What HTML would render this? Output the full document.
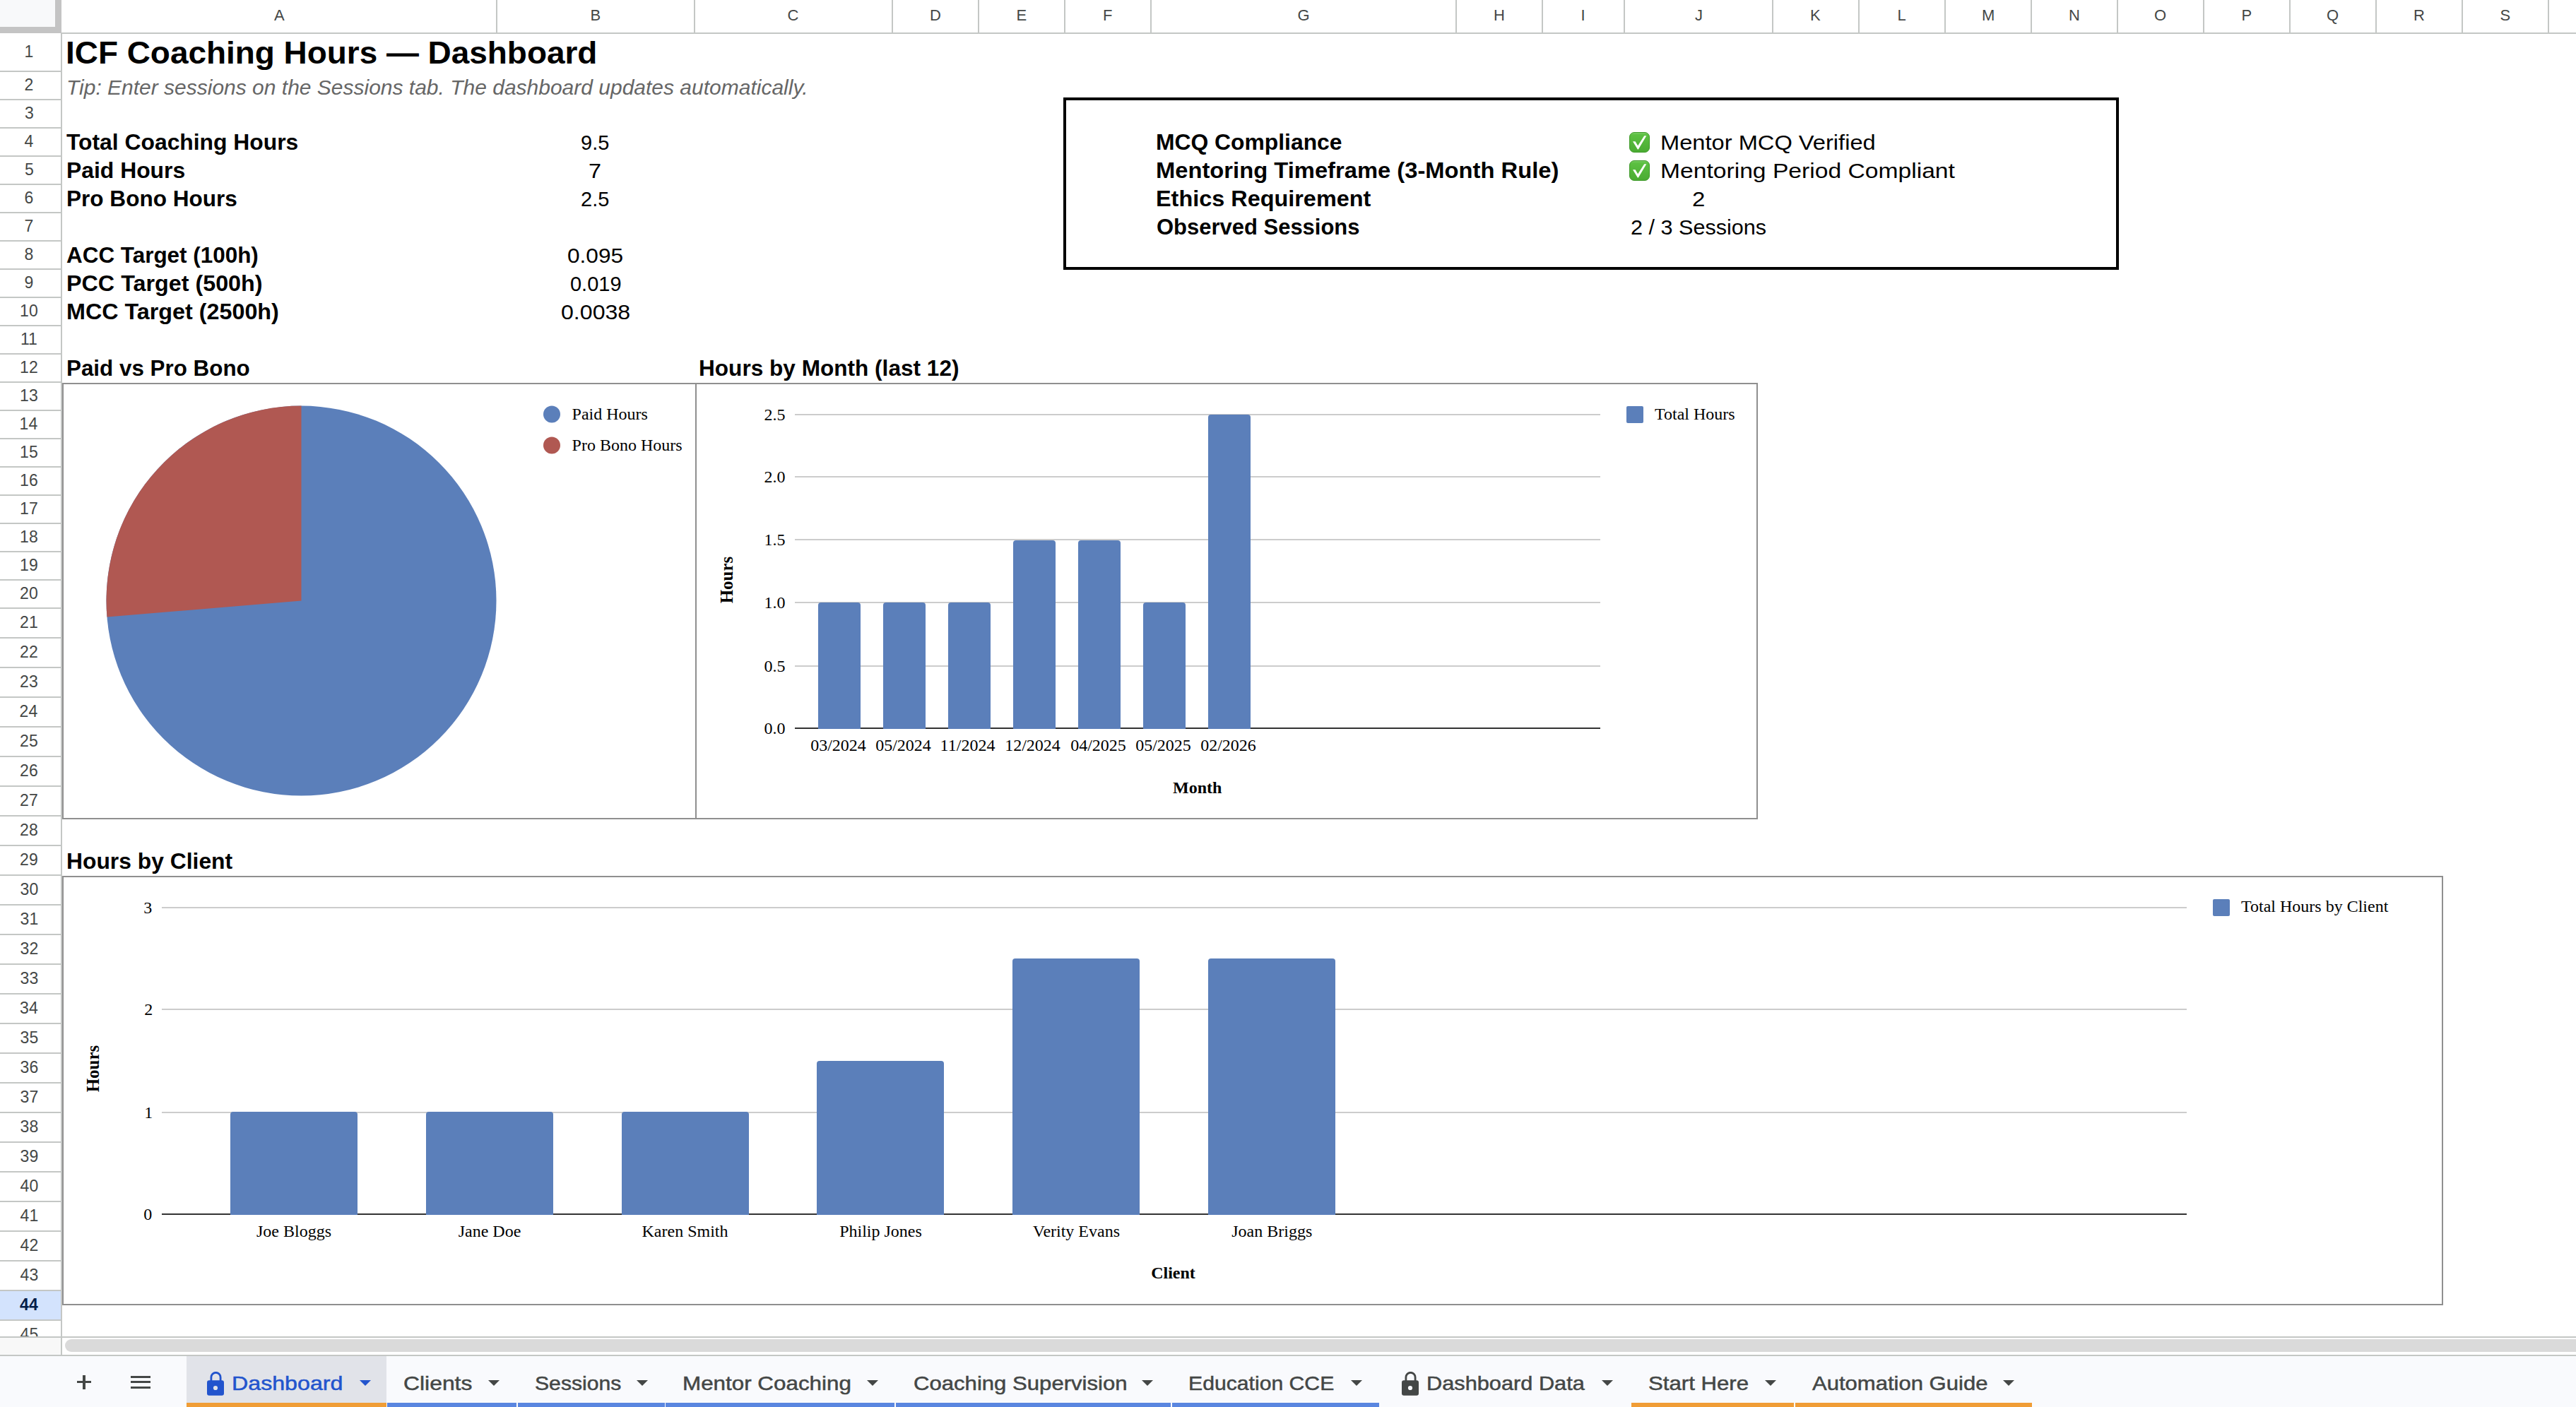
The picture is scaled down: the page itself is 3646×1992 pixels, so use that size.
<!DOCTYPE html>
<html><head><meta charset="utf-8"><title>ICF Coaching Hours — Dashboard</title>
<style>
html,body{margin:0;padding:0;background:#fff;}
body{width:3646px;height:1992px;overflow:hidden;position:relative;}
.t{position:absolute;white-space:nowrap;transform-origin:0 0;}
.r{position:absolute;}
#vp{position:absolute;left:0;top:0;width:3646px;height:1892px;overflow:hidden;}
</style></head><body>
<div id="vp">
<div class="r" style="left:0px;top:0px;width:78px;height:38px;background:#f8f9fa;"></div>
<div class="r" style="left:78px;top:0px;width:9px;height:47px;background:#c4c4c4;"></div>
<div class="r" style="left:0px;top:38px;width:87px;height:9px;background:#c4c4c4;"></div>
<div class="r" style="left:87px;top:46px;width:3559px;height:2px;background:#c4c7c5;"></div>
<div class="r" style="left:702px;top:0px;width:2px;height:46px;background:#c4c7c5;"></div>
<div class="r" style="left:982px;top:0px;width:2px;height:46px;background:#c4c7c5;"></div>
<div class="r" style="left:1262px;top:0px;width:2px;height:46px;background:#c4c7c5;"></div>
<div class="r" style="left:1384px;top:0px;width:2px;height:46px;background:#c4c7c5;"></div>
<div class="r" style="left:1506px;top:0px;width:2px;height:46px;background:#c4c7c5;"></div>
<div class="r" style="left:1628px;top:0px;width:2px;height:46px;background:#c4c7c5;"></div>
<div class="r" style="left:2060px;top:0px;width:2px;height:46px;background:#c4c7c5;"></div>
<div class="r" style="left:2182px;top:0px;width:2px;height:46px;background:#c4c7c5;"></div>
<div class="r" style="left:2298px;top:0px;width:2px;height:46px;background:#c4c7c5;"></div>
<div class="r" style="left:2508px;top:0px;width:2px;height:46px;background:#c4c7c5;"></div>
<div class="r" style="left:2630px;top:0px;width:2px;height:46px;background:#c4c7c5;"></div>
<div class="r" style="left:2752px;top:0px;width:2px;height:46px;background:#c4c7c5;"></div>
<div class="r" style="left:2874px;top:0px;width:2px;height:46px;background:#c4c7c5;"></div>
<div class="r" style="left:2996px;top:0px;width:2px;height:46px;background:#c4c7c5;"></div>
<div class="r" style="left:3118px;top:0px;width:2px;height:46px;background:#c4c7c5;"></div>
<div class="r" style="left:3240px;top:0px;width:2px;height:46px;background:#c4c7c5;"></div>
<div class="r" style="left:3362px;top:0px;width:2px;height:46px;background:#c4c7c5;"></div>
<div class="r" style="left:3484px;top:0px;width:2px;height:46px;background:#c4c7c5;"></div>
<div class="r" style="left:3606px;top:0px;width:2px;height:46px;background:#c4c7c5;"></div>
<div class="t" style='left:388.00px;top:11.38px;font-size:22px;line-height:22px;font-family:"Liberation Sans", sans-serif;font-weight:400;color:#444746;'>A</div>
<div class="t" style='left:835.50px;top:11.38px;font-size:22px;line-height:22px;font-family:"Liberation Sans", sans-serif;font-weight:400;color:#444746;'>B</div>
<div class="t" style='left:1114.50px;top:11.38px;font-size:22px;line-height:22px;font-family:"Liberation Sans", sans-serif;font-weight:400;color:#444746;'>C</div>
<div class="t" style='left:1316.00px;top:11.38px;font-size:22px;line-height:22px;font-family:"Liberation Sans", sans-serif;font-weight:400;color:#444746;'>D</div>
<div class="t" style='left:1438.50px;top:11.38px;font-size:22px;line-height:22px;font-family:"Liberation Sans", sans-serif;font-weight:400;color:#444746;'>E</div>
<div class="t" style='left:1561.00px;top:11.38px;font-size:22px;line-height:22px;font-family:"Liberation Sans", sans-serif;font-weight:400;color:#444746;'>F</div>
<div class="t" style='left:1836.50px;top:11.38px;font-size:22px;line-height:22px;font-family:"Liberation Sans", sans-serif;font-weight:400;color:#444746;'>G</div>
<div class="t" style='left:2114.00px;top:11.38px;font-size:22px;line-height:22px;font-family:"Liberation Sans", sans-serif;font-weight:400;color:#444746;'>H</div>
<div class="t" style='left:2237.50px;top:11.38px;font-size:22px;line-height:22px;font-family:"Liberation Sans", sans-serif;font-weight:400;color:#444746;'>I</div>
<div class="t" style='left:2399.00px;top:11.38px;font-size:22px;line-height:22px;font-family:"Liberation Sans", sans-serif;font-weight:400;color:#444746;'>J</div>
<div class="t" style='left:2562.00px;top:11.38px;font-size:22px;line-height:22px;font-family:"Liberation Sans", sans-serif;font-weight:400;color:#444746;'>K</div>
<div class="t" style='left:2685.50px;top:11.38px;font-size:22px;line-height:22px;font-family:"Liberation Sans", sans-serif;font-weight:400;color:#444746;'>L</div>
<div class="t" style='left:2805.00px;top:11.38px;font-size:22px;line-height:22px;font-family:"Liberation Sans", sans-serif;font-weight:400;color:#444746;'>M</div>
<div class="t" style='left:2928.00px;top:11.38px;font-size:22px;line-height:22px;font-family:"Liberation Sans", sans-serif;font-weight:400;color:#444746;'>N</div>
<div class="t" style='left:3049.00px;top:11.38px;font-size:22px;line-height:22px;font-family:"Liberation Sans", sans-serif;font-weight:400;color:#444746;'>O</div>
<div class="t" style='left:3172.50px;top:11.38px;font-size:22px;line-height:22px;font-family:"Liberation Sans", sans-serif;font-weight:400;color:#444746;'>P</div>
<div class="t" style='left:3293.00px;top:11.38px;font-size:22px;line-height:22px;font-family:"Liberation Sans", sans-serif;font-weight:400;color:#444746;'>Q</div>
<div class="t" style='left:3416.00px;top:11.38px;font-size:22px;line-height:22px;font-family:"Liberation Sans", sans-serif;font-weight:400;color:#444746;'>R</div>
<div class="t" style='left:3538.50px;top:11.38px;font-size:22px;line-height:22px;font-family:"Liberation Sans", sans-serif;font-weight:400;color:#444746;'>S</div>
<div class="r" style="left:86px;top:47px;width:2px;height:1870px;background:#c4c7c5;"></div>
<div class="r" style="left:0px;top:100px;width:86px;height:2px;background:#c4c7c5;"></div>
<div class="t" style='left:34.50px;top:61.53px;font-size:23px;line-height:23px;font-family:"Liberation Sans", sans-serif;font-weight:400;color:#444746;'>1</div>
<div class="r" style="left:0px;top:140px;width:86px;height:2px;background:#c4c7c5;"></div>
<div class="t" style='left:34.50px;top:108.53px;font-size:23px;line-height:23px;font-family:"Liberation Sans", sans-serif;font-weight:400;color:#444746;'>2</div>
<div class="r" style="left:0px;top:180px;width:86px;height:2px;background:#c4c7c5;"></div>
<div class="t" style='left:35.00px;top:148.53px;font-size:23px;line-height:23px;font-family:"Liberation Sans", sans-serif;font-weight:400;color:#444746;'>3</div>
<div class="r" style="left:0px;top:220px;width:86px;height:2px;background:#c4c7c5;"></div>
<div class="t" style='left:34.50px;top:188.53px;font-size:23px;line-height:23px;font-family:"Liberation Sans", sans-serif;font-weight:400;color:#444746;'>4</div>
<div class="r" style="left:0px;top:260px;width:86px;height:2px;background:#c4c7c5;"></div>
<div class="t" style='left:35.00px;top:228.53px;font-size:23px;line-height:23px;font-family:"Liberation Sans", sans-serif;font-weight:400;color:#444746;'>5</div>
<div class="r" style="left:0px;top:300px;width:86px;height:2px;background:#c4c7c5;"></div>
<div class="t" style='left:34.50px;top:268.53px;font-size:23px;line-height:23px;font-family:"Liberation Sans", sans-serif;font-weight:400;color:#444746;'>6</div>
<div class="r" style="left:0px;top:340px;width:86px;height:2px;background:#c4c7c5;"></div>
<div class="t" style='left:34.50px;top:308.53px;font-size:23px;line-height:23px;font-family:"Liberation Sans", sans-serif;font-weight:400;color:#444746;'>7</div>
<div class="r" style="left:0px;top:380px;width:86px;height:2px;background:#c4c7c5;"></div>
<div class="t" style='left:34.50px;top:348.53px;font-size:23px;line-height:23px;font-family:"Liberation Sans", sans-serif;font-weight:400;color:#444746;'>8</div>
<div class="r" style="left:0px;top:420px;width:86px;height:2px;background:#c4c7c5;"></div>
<div class="t" style='left:34.50px;top:388.53px;font-size:23px;line-height:23px;font-family:"Liberation Sans", sans-serif;font-weight:400;color:#444746;'>9</div>
<div class="r" style="left:0px;top:460px;width:86px;height:2px;background:#c4c7c5;"></div>
<div class="t" style='left:28.10px;top:428.53px;font-size:23px;line-height:23px;font-family:"Liberation Sans", sans-serif;font-weight:400;color:#444746;'>10</div>
<div class="r" style="left:0px;top:500px;width:86px;height:2px;background:#c4c7c5;"></div>
<div class="t" style='left:28.96px;top:468.53px;font-size:23px;line-height:23px;font-family:"Liberation Sans", sans-serif;font-weight:400;color:#444746;'>11</div>
<div class="r" style="left:0px;top:540px;width:86px;height:2px;background:#c4c7c5;"></div>
<div class="t" style='left:28.10px;top:508.53px;font-size:23px;line-height:23px;font-family:"Liberation Sans", sans-serif;font-weight:400;color:#444746;'>12</div>
<div class="r" style="left:0px;top:580px;width:86px;height:2px;background:#c4c7c5;"></div>
<div class="t" style='left:28.10px;top:548.53px;font-size:23px;line-height:23px;font-family:"Liberation Sans", sans-serif;font-weight:400;color:#444746;'>13</div>
<div class="r" style="left:0px;top:620px;width:86px;height:2px;background:#c4c7c5;"></div>
<div class="t" style='left:27.60px;top:588.53px;font-size:23px;line-height:23px;font-family:"Liberation Sans", sans-serif;font-weight:400;color:#444746;'>14</div>
<div class="r" style="left:0px;top:660px;width:86px;height:2px;background:#c4c7c5;"></div>
<div class="t" style='left:28.10px;top:628.53px;font-size:23px;line-height:23px;font-family:"Liberation Sans", sans-serif;font-weight:400;color:#444746;'>15</div>
<div class="r" style="left:0px;top:700px;width:86px;height:2px;background:#c4c7c5;"></div>
<div class="t" style='left:28.10px;top:668.53px;font-size:23px;line-height:23px;font-family:"Liberation Sans", sans-serif;font-weight:400;color:#444746;'>16</div>
<div class="r" style="left:0px;top:740px;width:86px;height:2px;background:#c4c7c5;"></div>
<div class="t" style='left:28.10px;top:708.53px;font-size:23px;line-height:23px;font-family:"Liberation Sans", sans-serif;font-weight:400;color:#444746;'>17</div>
<div class="r" style="left:0px;top:780px;width:86px;height:2px;background:#c4c7c5;"></div>
<div class="t" style='left:28.10px;top:748.53px;font-size:23px;line-height:23px;font-family:"Liberation Sans", sans-serif;font-weight:400;color:#444746;'>18</div>
<div class="r" style="left:0px;top:820px;width:86px;height:2px;background:#c4c7c5;"></div>
<div class="t" style='left:28.10px;top:788.53px;font-size:23px;line-height:23px;font-family:"Liberation Sans", sans-serif;font-weight:400;color:#444746;'>19</div>
<div class="r" style="left:0px;top:860px;width:86px;height:2px;background:#c4c7c5;"></div>
<div class="t" style='left:28.10px;top:828.53px;font-size:23px;line-height:23px;font-family:"Liberation Sans", sans-serif;font-weight:400;color:#444746;'>20</div>
<div class="r" style="left:0px;top:902px;width:86px;height:2px;background:#c4c7c5;"></div>
<div class="t" style='left:28.10px;top:869.53px;font-size:23px;line-height:23px;font-family:"Liberation Sans", sans-serif;font-weight:400;color:#444746;'>21</div>
<div class="r" style="left:0px;top:944px;width:86px;height:2px;background:#c4c7c5;"></div>
<div class="t" style='left:28.10px;top:911.53px;font-size:23px;line-height:23px;font-family:"Liberation Sans", sans-serif;font-weight:400;color:#444746;'>22</div>
<div class="r" style="left:0px;top:986px;width:86px;height:2px;background:#c4c7c5;"></div>
<div class="t" style='left:28.10px;top:953.53px;font-size:23px;line-height:23px;font-family:"Liberation Sans", sans-serif;font-weight:400;color:#444746;'>23</div>
<div class="r" style="left:0px;top:1028px;width:86px;height:2px;background:#c4c7c5;"></div>
<div class="t" style='left:27.60px;top:995.53px;font-size:23px;line-height:23px;font-family:"Liberation Sans", sans-serif;font-weight:400;color:#444746;'>24</div>
<div class="r" style="left:0px;top:1070px;width:86px;height:2px;background:#c4c7c5;"></div>
<div class="t" style='left:28.10px;top:1037.53px;font-size:23px;line-height:23px;font-family:"Liberation Sans", sans-serif;font-weight:400;color:#444746;'>25</div>
<div class="r" style="left:0px;top:1112px;width:86px;height:2px;background:#c4c7c5;"></div>
<div class="t" style='left:28.10px;top:1079.53px;font-size:23px;line-height:23px;font-family:"Liberation Sans", sans-serif;font-weight:400;color:#444746;'>26</div>
<div class="r" style="left:0px;top:1154px;width:86px;height:2px;background:#c4c7c5;"></div>
<div class="t" style='left:28.10px;top:1121.53px;font-size:23px;line-height:23px;font-family:"Liberation Sans", sans-serif;font-weight:400;color:#444746;'>27</div>
<div class="r" style="left:0px;top:1196px;width:86px;height:2px;background:#c4c7c5;"></div>
<div class="t" style='left:28.10px;top:1163.53px;font-size:23px;line-height:23px;font-family:"Liberation Sans", sans-serif;font-weight:400;color:#444746;'>28</div>
<div class="r" style="left:0px;top:1238px;width:86px;height:2px;background:#c4c7c5;"></div>
<div class="t" style='left:28.10px;top:1205.53px;font-size:23px;line-height:23px;font-family:"Liberation Sans", sans-serif;font-weight:400;color:#444746;'>29</div>
<div class="r" style="left:0px;top:1280px;width:86px;height:2px;background:#c4c7c5;"></div>
<div class="t" style='left:28.60px;top:1247.53px;font-size:23px;line-height:23px;font-family:"Liberation Sans", sans-serif;font-weight:400;color:#444746;'>30</div>
<div class="r" style="left:0px;top:1322px;width:86px;height:2px;background:#c4c7c5;"></div>
<div class="t" style='left:28.60px;top:1289.53px;font-size:23px;line-height:23px;font-family:"Liberation Sans", sans-serif;font-weight:400;color:#444746;'>31</div>
<div class="r" style="left:0px;top:1364px;width:86px;height:2px;background:#c4c7c5;"></div>
<div class="t" style='left:28.60px;top:1331.53px;font-size:23px;line-height:23px;font-family:"Liberation Sans", sans-serif;font-weight:400;color:#444746;'>32</div>
<div class="r" style="left:0px;top:1406px;width:86px;height:2px;background:#c4c7c5;"></div>
<div class="t" style='left:28.60px;top:1373.53px;font-size:23px;line-height:23px;font-family:"Liberation Sans", sans-serif;font-weight:400;color:#444746;'>33</div>
<div class="r" style="left:0px;top:1448px;width:86px;height:2px;background:#c4c7c5;"></div>
<div class="t" style='left:28.10px;top:1415.53px;font-size:23px;line-height:23px;font-family:"Liberation Sans", sans-serif;font-weight:400;color:#444746;'>34</div>
<div class="r" style="left:0px;top:1490px;width:86px;height:2px;background:#c4c7c5;"></div>
<div class="t" style='left:28.60px;top:1457.53px;font-size:23px;line-height:23px;font-family:"Liberation Sans", sans-serif;font-weight:400;color:#444746;'>35</div>
<div class="r" style="left:0px;top:1532px;width:86px;height:2px;background:#c4c7c5;"></div>
<div class="t" style='left:28.60px;top:1499.53px;font-size:23px;line-height:23px;font-family:"Liberation Sans", sans-serif;font-weight:400;color:#444746;'>36</div>
<div class="r" style="left:0px;top:1574px;width:86px;height:2px;background:#c4c7c5;"></div>
<div class="t" style='left:28.60px;top:1541.53px;font-size:23px;line-height:23px;font-family:"Liberation Sans", sans-serif;font-weight:400;color:#444746;'>37</div>
<div class="r" style="left:0px;top:1616px;width:86px;height:2px;background:#c4c7c5;"></div>
<div class="t" style='left:28.60px;top:1583.53px;font-size:23px;line-height:23px;font-family:"Liberation Sans", sans-serif;font-weight:400;color:#444746;'>38</div>
<div class="r" style="left:0px;top:1658px;width:86px;height:2px;background:#c4c7c5;"></div>
<div class="t" style='left:28.60px;top:1625.53px;font-size:23px;line-height:23px;font-family:"Liberation Sans", sans-serif;font-weight:400;color:#444746;'>39</div>
<div class="r" style="left:0px;top:1700px;width:86px;height:2px;background:#c4c7c5;"></div>
<div class="t" style='left:28.60px;top:1667.53px;font-size:23px;line-height:23px;font-family:"Liberation Sans", sans-serif;font-weight:400;color:#444746;'>40</div>
<div class="r" style="left:0px;top:1742px;width:86px;height:2px;background:#c4c7c5;"></div>
<div class="t" style='left:28.60px;top:1709.53px;font-size:23px;line-height:23px;font-family:"Liberation Sans", sans-serif;font-weight:400;color:#444746;'>41</div>
<div class="r" style="left:0px;top:1784px;width:86px;height:2px;background:#c4c7c5;"></div>
<div class="t" style='left:28.60px;top:1751.53px;font-size:23px;line-height:23px;font-family:"Liberation Sans", sans-serif;font-weight:400;color:#444746;'>42</div>
<div class="r" style="left:0px;top:1826px;width:86px;height:2px;background:#c4c7c5;"></div>
<div class="t" style='left:28.60px;top:1793.53px;font-size:23px;line-height:23px;font-family:"Liberation Sans", sans-serif;font-weight:400;color:#444746;'>43</div>
<div class="r" style="left:0px;top:1828px;width:86px;height:41px;background:#d3e3fd;"></div>
<div class="r" style="left:0px;top:1868px;width:86px;height:2px;background:#c4c7c5;"></div>
<div class="t" style='left:28.10px;top:1835.53px;font-size:23px;line-height:23px;font-family:"Liberation Sans", sans-serif;font-weight:700;color:#041e49;'>44</div>
<div class="t" style='left:28.60px;top:1877.53px;font-size:23px;line-height:23px;font-family:"Liberation Sans", sans-serif;font-weight:400;color:#444746;'>45</div>
<div class="t" style='left:92.74px;top:52.41px;font-size:45px;line-height:45px;font-family:"Liberation Sans", sans-serif;font-weight:700;color:#000;transform:scaleX(1.0201);'>ICF Coaching Hours — Dashboard</div>
<div class="t" style='left:93.73px;top:110.05px;font-size:29px;line-height:29px;font-family:"Liberation Sans", sans-serif;font-weight:400;color:#666666;font-style:italic;transform:scaleX(1.0342);'>Tip: Enter sessions on the Sessions tab. The dashboard updates automatically.</div>
<div class="t" style='left:94.00px;top:186.18px;font-size:30.5px;line-height:30.5px;font-family:"Liberation Sans", sans-serif;font-weight:700;color:#000;transform:scaleX(1.0435);'>Total Coaching Hours</div>
<div class="t" style='left:93.91px;top:226.18px;font-size:30.5px;line-height:30.5px;font-family:"Liberation Sans", sans-serif;font-weight:700;color:#000;transform:scaleX(1.0447);'>Paid Hours</div>
<div class="t" style='left:93.93px;top:266.18px;font-size:30.5px;line-height:30.5px;font-family:"Liberation Sans", sans-serif;font-weight:700;color:#000;transform:scaleX(1.0344);'>Pro Bono Hours</div>
<div class="t" style='left:94.00px;top:346.18px;font-size:30.5px;line-height:30.5px;font-family:"Liberation Sans", sans-serif;font-weight:700;color:#000;transform:scaleX(1.0303);'>ACC Target (100h)</div>
<div class="t" style='left:93.88px;top:386.18px;font-size:30.5px;line-height:30.5px;font-family:"Liberation Sans", sans-serif;font-weight:700;color:#000;transform:scaleX(1.0588);'>PCC Target (500h)</div>
<div class="t" style='left:93.88px;top:426.18px;font-size:30.5px;line-height:30.5px;font-family:"Liberation Sans", sans-serif;font-weight:700;color:#000;transform:scaleX(1.0587);'>MCC Target (2500h)</div>
<div class="t" style='left:822.33px;top:186.60px;font-size:30px;line-height:30px;font-family:"Liberation Sans", sans-serif;font-weight:400;color:#000;transform:scaleX(0.9670);'>9.5</div>
<div class="t" style='left:833.22px;top:226.60px;font-size:30px;line-height:30px;font-family:"Liberation Sans", sans-serif;font-weight:400;color:#000;transform:scaleX(1.0800);'>7</div>
<div class="t" style='left:822.33px;top:266.61px;font-size:30px;line-height:30px;font-family:"Liberation Sans", sans-serif;font-weight:400;color:#000;transform:scaleX(0.9670);'>2.5</div>
<div class="t" style='left:803.35px;top:346.61px;font-size:30px;line-height:30px;font-family:"Liberation Sans", sans-serif;font-weight:400;color:#000;transform:scaleX(1.0533);'>0.095</div>
<div class="t" style='left:806.53px;top:386.61px;font-size:30px;line-height:30px;font-family:"Liberation Sans", sans-serif;font-weight:400;color:#000;transform:scaleX(0.9661);'>0.019</div>
<div class="t" style='left:793.63px;top:426.61px;font-size:30px;line-height:30px;font-family:"Liberation Sans", sans-serif;font-weight:400;color:#000;transform:scaleX(1.0702);'>0.0038</div>
<div class="r" style="left:1505px;top:138px;width:1494px;height:4px;background:#000;"></div>
<div class="r" style="left:1505px;top:378px;width:1494px;height:4px;background:#000;"></div>
<div class="r" style="left:1505px;top:138px;width:4px;height:244px;background:#000;"></div>
<div class="r" style="left:2995px;top:138px;width:4px;height:244px;background:#000;"></div>
<div class="t" style='left:1635.91px;top:186.18px;font-size:30.5px;line-height:30.5px;font-family:"Liberation Sans", sans-serif;font-weight:700;color:#000;transform:scaleX(1.0435);'>MCQ Compliance</div>
<div class="t" style='left:1635.85px;top:226.18px;font-size:30.5px;line-height:30.5px;font-family:"Liberation Sans", sans-serif;font-weight:700;color:#000;transform:scaleX(1.0732);'>Mentoring Timeframe (3-Month Rule)</div>
<div class="t" style='left:1635.88px;top:266.18px;font-size:30.5px;line-height:30.5px;font-family:"Liberation Sans", sans-serif;font-weight:700;color:#000;transform:scaleX(1.0624);'>Ethics Requirement</div>
<div class="t" style='left:1636.98px;top:306.18px;font-size:30.5px;line-height:30.5px;font-family:"Liberation Sans", sans-serif;font-weight:700;color:#000;transform:scaleX(1.0155);'>Observed Sessions</div>
<div class="t" style='left:2350.42px;top:186.60px;font-size:30px;line-height:30px;font-family:"Liberation Sans", sans-serif;font-weight:400;color:#000;transform:scaleX(1.0879);'>Mentor MCQ Verified</div>
<div class="t" style='left:2350.36px;top:226.60px;font-size:30px;line-height:30px;font-family:"Liberation Sans", sans-serif;font-weight:400;color:#000;transform:scaleX(1.1211);'>Mentoring Period Compliant</div>
<div class="t" style='left:2394.70px;top:266.61px;font-size:30px;line-height:30px;font-family:"Liberation Sans", sans-serif;font-weight:400;color:#000;transform:scaleX(1.1000);'>2</div>
<div class="t" style='left:2307.78px;top:306.61px;font-size:30px;line-height:30px;font-family:"Liberation Sans", sans-serif;font-weight:400;color:#000;transform:scaleX(1.0191);'>2 / 3 Sessions</div>
<svg class="r" style="left:2306px;top:187px" width="29" height="29" viewBox="0 0 29 29"><defs><linearGradient id="eg187" x1="0" y1="0" x2="0" y2="1"><stop offset="0" stop-color="#7fd06a"/><stop offset="0.12" stop-color="#5cc042"/><stop offset="1" stop-color="#4aab32"/></linearGradient></defs><rect x="0.5" y="0.5" width="28" height="28" rx="6.5" fill="url(#eg187)" stroke="#3f9a2a" stroke-width="1"/><path d="M5 13.3 L8.6 13.3 L12.2 19.2 L21.2 5.3 L24.3 5.3 L12.9 24.4 L11.9 24.4 Z" fill="#fff"/></svg>
<svg class="r" style="left:2306px;top:227px" width="29" height="29" viewBox="0 0 29 29"><defs><linearGradient id="eg227" x1="0" y1="0" x2="0" y2="1"><stop offset="0" stop-color="#7fd06a"/><stop offset="0.12" stop-color="#5cc042"/><stop offset="1" stop-color="#4aab32"/></linearGradient></defs><rect x="0.5" y="0.5" width="28" height="28" rx="6.5" fill="url(#eg227)" stroke="#3f9a2a" stroke-width="1"/><path d="M5 13.3 L8.6 13.3 L12.2 19.2 L21.2 5.3 L24.3 5.3 L12.9 24.4 L11.9 24.4 Z" fill="#fff"/></svg>
<div class="t" style='left:93.84px;top:506.18px;font-size:30.5px;line-height:30.5px;font-family:"Liberation Sans", sans-serif;font-weight:700;color:#000;transform:scaleX(1.0285);'>Paid vs Pro Bono</div>
<div class="t" style='left:988.73px;top:506.18px;font-size:30.5px;line-height:30.5px;font-family:"Liberation Sans", sans-serif;font-weight:700;color:#000;transform:scaleX(1.0354);'>Hours by Month (last 12)</div>
<div class="t" style='left:93.81px;top:1204.18px;font-size:30.5px;line-height:30.5px;font-family:"Liberation Sans", sans-serif;font-weight:700;color:#000;transform:scaleX(1.0433);'>Hours by Client</div>
<div class="r" style="left:88px;top:542px;width:897px;height:2px;background:#8f8f8f;"></div>
<div class="r" style="left:88px;top:1158px;width:897px;height:2px;background:#8f8f8f;"></div>
<div class="r" style="left:88px;top:542px;width:2px;height:618px;background:#8f8f8f;"></div>
<div class="r" style="left:984px;top:542px;width:2px;height:618px;background:#8f8f8f;"></div>
<svg class="r" style="left:0;top:0" width="1000" height="1200"><circle cx="426.5" cy="850.6" r="276" fill="#5b7fba"/><path d="M426.5 850.6 L426.5 574.6 A276 276 0 0 0 151.44 873.39 Z" fill="#b05852"/><circle cx="781" cy="586.4" r="12" fill="#5b7fba"/><circle cx="781" cy="630.4" r="12" fill="#b05852"/></svg>
<div class="t" style='left:809.60px;top:574.10px;font-size:24px;line-height:24px;font-family:"Liberation Serif", serif;font-weight:400;color:#000;'>Paid Hours</div>
<div class="t" style='left:809.60px;top:618.00px;font-size:24px;line-height:24px;font-family:"Liberation Serif", serif;font-weight:400;color:#000;'>Pro Bono Hours</div>
<div class="r" style="left:984px;top:542px;width:1504px;height:2px;background:#8f8f8f;"></div>
<div class="r" style="left:984px;top:1158px;width:1504px;height:2px;background:#8f8f8f;"></div>
<div class="r" style="left:984px;top:542px;width:2px;height:618px;background:#8f8f8f;"></div>
<div class="r" style="left:2486px;top:542px;width:2px;height:618px;background:#8f8f8f;"></div>
<div class="r" style="left:1125px;top:1030px;width:1140px;height:2px;background:#333333;"></div>
<div class="t" style='left:1081.50px;top:1018.90px;font-size:24px;line-height:24px;font-family:"Liberation Serif", serif;font-weight:400;color:#000;'>0.0</div>
<div class="r" style="left:1125px;top:942px;width:1140px;height:2px;background:#cccccc;"></div>
<div class="t" style='left:1081.50px;top:930.50px;font-size:24px;line-height:24px;font-family:"Liberation Serif", serif;font-weight:400;color:#000;'>0.5</div>
<div class="r" style="left:1125px;top:852px;width:1140px;height:2px;background:#cccccc;"></div>
<div class="t" style='left:1081.50px;top:840.90px;font-size:24px;line-height:24px;font-family:"Liberation Serif", serif;font-weight:400;color:#000;'>1.0</div>
<div class="r" style="left:1125px;top:763px;width:1140px;height:2px;background:#cccccc;"></div>
<div class="t" style='left:1081.50px;top:752.30px;font-size:24px;line-height:24px;font-family:"Liberation Serif", serif;font-weight:400;color:#000;'>1.5</div>
<div class="r" style="left:1125px;top:674px;width:1140px;height:2px;background:#cccccc;"></div>
<div class="t" style='left:1081.50px;top:662.90px;font-size:24px;line-height:24px;font-family:"Liberation Serif", serif;font-weight:400;color:#000;'>2.0</div>
<div class="r" style="left:1125px;top:586px;width:1140px;height:2px;background:#cccccc;"></div>
<div class="t" style='left:1081.50px;top:574.90px;font-size:24px;line-height:24px;font-family:"Liberation Serif", serif;font-weight:400;color:#000;'>2.5</div>
<div class="r" style="left:1158px;top:853px;width:60px;height:179px;background:#5b7fba;border-radius:4px 4px 0 0;"></div>
<div class="t" style='left:1147.17px;top:1042.90px;font-size:24px;line-height:24px;font-family:"Liberation Serif", serif;font-weight:400;color:#000;'>03/2024</div>
<div class="r" style="left:1250px;top:853px;width:60px;height:179px;background:#5b7fba;border-radius:4px 4px 0 0;"></div>
<div class="t" style='left:1239.17px;top:1042.90px;font-size:24px;line-height:24px;font-family:"Liberation Serif", serif;font-weight:400;color:#000;'>05/2024</div>
<div class="r" style="left:1342px;top:853px;width:60px;height:179px;background:#5b7fba;border-radius:4px 4px 0 0;"></div>
<div class="t" style='left:1330.61px;top:1042.90px;font-size:24px;line-height:24px;font-family:"Liberation Serif", serif;font-weight:400;color:#000;'>11/2024</div>
<div class="r" style="left:1434px;top:765px;width:60px;height:267px;background:#5b7fba;border-radius:4px 4px 0 0;"></div>
<div class="t" style='left:1422.17px;top:1042.90px;font-size:24px;line-height:24px;font-family:"Liberation Serif", serif;font-weight:400;color:#000;'>12/2024</div>
<div class="r" style="left:1526px;top:765px;width:60px;height:267px;background:#5b7fba;border-radius:4px 4px 0 0;"></div>
<div class="t" style='left:1515.17px;top:1042.90px;font-size:24px;line-height:24px;font-family:"Liberation Serif", serif;font-weight:400;color:#000;'>04/2025</div>
<div class="r" style="left:1618px;top:853px;width:60px;height:179px;background:#5b7fba;border-radius:4px 4px 0 0;"></div>
<div class="t" style='left:1607.17px;top:1042.90px;font-size:24px;line-height:24px;font-family:"Liberation Serif", serif;font-weight:400;color:#000;'>05/2025</div>
<div class="r" style="left:1710px;top:587px;width:60px;height:445px;background:#5b7fba;border-radius:4px 4px 0 0;"></div>
<div class="t" style='left:1699.17px;top:1042.90px;font-size:24px;line-height:24px;font-family:"Liberation Serif", serif;font-weight:400;color:#000;'>02/2026</div>
<div class="t" style='left:1660.00px;top:1102.90px;font-size:24px;line-height:24px;font-family:"Liberation Serif", serif;font-weight:700;color:#000;'>Month</div>
<div class="r" style="left:2301.5px;top:574.5px;width:24px;height:24px;background:#5b7fba;border-radius:2px;"></div>
<div class="t" style='left:2342.00px;top:573.90px;font-size:24px;line-height:24px;font-family:"Liberation Serif", serif;font-weight:400;color:#000;'>Total Hours</div>
<div class="t" style="left:1027.9px;top:820.8px;width:0;height:0;"><div style="position:absolute;left:0;top:0;transform:translate(-50%,-50%) rotate(-90deg);font-family:&quot;Liberation Serif&quot;,serif;font-weight:700;font-size:25px;line-height:25px;white-space:nowrap">Hours</div></div>
<div class="r" style="left:88px;top:1240px;width:3370px;height:2px;background:#8f8f8f;"></div>
<div class="r" style="left:88px;top:1846px;width:3370px;height:2px;background:#8f8f8f;"></div>
<div class="r" style="left:88px;top:1240px;width:2px;height:608px;background:#8f8f8f;"></div>
<div class="r" style="left:3456px;top:1240px;width:2px;height:608px;background:#8f8f8f;"></div>
<div class="r" style="left:229px;top:1718px;width:2866px;height:2px;background:#333333;"></div>
<div class="t" style='left:203.30px;top:1706.90px;font-size:24px;line-height:24px;font-family:"Liberation Serif", serif;font-weight:400;color:#000;'>0</div>
<div class="r" style="left:229px;top:1574px;width:2866px;height:2px;background:#cccccc;"></div>
<div class="t" style='left:204.30px;top:1562.80px;font-size:24px;line-height:24px;font-family:"Liberation Serif", serif;font-weight:400;color:#000;'>1</div>
<div class="r" style="left:229px;top:1428px;width:2866px;height:2px;background:#cccccc;"></div>
<div class="t" style='left:204.30px;top:1416.60px;font-size:24px;line-height:24px;font-family:"Liberation Serif", serif;font-weight:400;color:#000;'>2</div>
<div class="r" style="left:229px;top:1284px;width:2866px;height:2px;background:#cccccc;"></div>
<div class="t" style='left:203.30px;top:1272.80px;font-size:24px;line-height:24px;font-family:"Liberation Serif", serif;font-weight:400;color:#000;'>3</div>
<div class="r" style="left:326px;top:1574px;width:180px;height:146px;background:#5b7fba;border-radius:4px 4px 0 0;"></div>
<div class="t" style='left:362.97px;top:1730.90px;font-size:24px;line-height:24px;font-family:"Liberation Serif", serif;font-weight:400;color:#000;'>Joe Bloggs</div>
<div class="r" style="left:603px;top:1574px;width:180px;height:146px;background:#5b7fba;border-radius:4px 4px 0 0;"></div>
<div class="t" style='left:648.66px;top:1730.90px;font-size:24px;line-height:24px;font-family:"Liberation Serif", serif;font-weight:400;color:#000;'>Jane Doe</div>
<div class="r" style="left:880px;top:1574px;width:180px;height:146px;background:#5b7fba;border-radius:4px 4px 0 0;"></div>
<div class="t" style='left:908.51px;top:1730.90px;font-size:24px;line-height:24px;font-family:"Liberation Serif", serif;font-weight:400;color:#000;'>Karen Smith</div>
<div class="r" style="left:1156px;top:1502px;width:180px;height:218px;background:#5b7fba;border-radius:4px 4px 0 0;"></div>
<div class="t" style='left:1188.18px;top:1730.90px;font-size:24px;line-height:24px;font-family:"Liberation Serif", serif;font-weight:400;color:#000;'>Philip Jones</div>
<div class="r" style="left:1433px;top:1357px;width:180px;height:363px;background:#5b7fba;border-radius:4px 4px 0 0;"></div>
<div class="t" style='left:1461.72px;top:1730.90px;font-size:24px;line-height:24px;font-family:"Liberation Serif", serif;font-weight:400;color:#000;'>Verity Evans</div>
<div class="r" style="left:1710px;top:1357px;width:180px;height:363px;background:#5b7fba;border-radius:4px 4px 0 0;"></div>
<div class="t" style='left:1743.22px;top:1730.90px;font-size:24px;line-height:24px;font-family:"Liberation Serif", serif;font-weight:400;color:#000;'>Joan Briggs</div>
<div class="t" style='left:1629.17px;top:1789.90px;font-size:24px;line-height:24px;font-family:"Liberation Serif", serif;font-weight:700;color:#000;'>Client</div>
<div class="r" style="left:3131.5px;top:1272.5px;width:24px;height:24px;background:#5b7fba;border-radius:2px;"></div>
<div class="t" style='left:3172.00px;top:1270.90px;font-size:24px;line-height:24px;font-family:"Liberation Serif", serif;font-weight:400;color:#000;'>Total Hours by Client</div>
<div class="t" style="left:130.6px;top:1512.6px;width:0;height:0;"><div style="position:absolute;left:0;top:0;transform:translate(-50%,-50%) rotate(-90deg);font-family:&quot;Liberation Serif&quot;,serif;font-weight:700;font-size:25px;line-height:25px;white-space:nowrap">Hours</div></div>
</div>
<div class="r" style="left:0px;top:1892px;width:3646px;height:2px;background:#c4c7c5;"></div>
<div class="r" style="left:0px;top:1894px;width:86px;height:24px;background:#f8f8f8;"></div>
<div class="r" style="left:86px;top:1894px;width:2px;height:24px;background:#c4c7c5;"></div>
<div class="r" style="left:88px;top:1894px;width:3558px;height:24px;background:#ffffff;"></div>
<div class="r" style="left:92px;top:1896px;width:3646px;height:18px;background:#dadada;border-radius:9px;"></div>
<div class="r" style="left:0px;top:1918px;width:3646px;height:2px;background:#c4c7c5;"></div>
<div class="r" style="left:0px;top:1920px;width:3646px;height:72px;background:#f9fafd;"></div>
<div class="r" style="left:109px;top:1955.2px;width:20px;height:3.3px;background:#444746;"></div>
<div class="r" style="left:117.4px;top:1947px;width:3.3px;height:20px;background:#444746;"></div>
<div class="r" style="left:185px;top:1948.1px;width:28px;height:2.7px;background:#444746;"></div>
<div class="r" style="left:185px;top:1955.4px;width:28px;height:2.7px;background:#444746;"></div>
<div class="r" style="left:185px;top:1963.1px;width:28px;height:2.7px;background:#444746;"></div>
<div class="r" style="left:264px;top:1920px;width:283px;height:72px;background:#e1e3e9;"></div>
<div class="r" style="left:264px;top:1986px;width:283px;height:6px;background:#f09d36;"></div>
<div class="t" style='left:327.70px;top:1944.60px;font-size:28px;line-height:28px;font-family:"Liberation Sans", sans-serif;font-weight:400;-webkit-text-stroke:0.5px #2254cd;color:#2254cd;transform:scaleX(1.1491);'>Dashboard</div>
<svg class="r" style="left:508.5px;top:1954px" width="16" height="8" viewBox="0 0 16 8"><path d="M0 0 L16 0 L8 8 Z" fill="#2254cd"/></svg>
<svg class="r" style="left:293px;top:1942px" width="24" height="34" viewBox="0 0 24 34"><path d="M5.9 13.5 V7.9 A6.6 6.6 0 0 1 19.1 7.9 V13.5" fill="none" stroke="#2254cd" stroke-width="2.8"/><rect x="0" y="12.2" width="24" height="21.6" rx="3" fill="#2254cd"/><circle cx="12" cy="23" r="3.1" fill="#e1e3e9"/></svg>
<div class="r" style="left:548px;top:1986px;width:183px;height:6px;background:#5a86e0;"></div>
<div class="t" style='left:571.46px;top:1944.60px;font-size:28px;line-height:28px;font-family:"Liberation Sans", sans-serif;font-weight:400;-webkit-text-stroke:0.5px #444746;color:#444746;transform:scaleX(1.1378);'>Clients</div>
<svg class="r" style="left:691px;top:1954px" width="16" height="8" viewBox="0 0 16 8"><path d="M0 0 L16 0 L8 8 Z" fill="#444746"/></svg>
<div class="r" style="left:733px;top:1986px;width:208px;height:6px;background:#5a86e0;"></div>
<div class="t" style='left:756.72px;top:1944.60px;font-size:28px;line-height:28px;font-family:"Liberation Sans", sans-serif;font-weight:400;-webkit-text-stroke:0.5px #444746;color:#444746;transform:scaleX(1.0769);'>Sessions</div>
<svg class="r" style="left:900.6px;top:1954px" width="16" height="8" viewBox="0 0 16 8"><path d="M0 0 L16 0 L8 8 Z" fill="#444746"/></svg>
<div class="r" style="left:942px;top:1986px;width:324px;height:6px;background:#5a86e0;"></div>
<div class="t" style='left:965.66px;top:1944.60px;font-size:28px;line-height:28px;font-family:"Liberation Sans", sans-serif;font-weight:400;-webkit-text-stroke:0.5px #444746;color:#444746;transform:scaleX(1.1204);'>Mentor Coaching</div>
<svg class="r" style="left:1226.9px;top:1954px" width="16" height="8" viewBox="0 0 16 8"><path d="M0 0 L16 0 L8 8 Z" fill="#444746"/></svg>
<div class="r" style="left:1268px;top:1986px;width:389px;height:6px;background:#5a86e0;"></div>
<div class="t" style='left:1292.89px;top:1944.60px;font-size:28px;line-height:28px;font-family:"Liberation Sans", sans-serif;font-weight:400;-webkit-text-stroke:0.5px #444746;color:#444746;transform:scaleX(1.1108);'>Coaching Supervision</div>
<svg class="r" style="left:1616px;top:1954px" width="16" height="8" viewBox="0 0 16 8"><path d="M0 0 L16 0 L8 8 Z" fill="#444746"/></svg>
<div class="r" style="left:1659px;top:1986px;width:293px;height:6px;background:#5a86e0;"></div>
<div class="t" style='left:1682.14px;top:1944.60px;font-size:28px;line-height:28px;font-family:"Liberation Sans", sans-serif;font-weight:400;-webkit-text-stroke:0.5px #444746;color:#444746;transform:scaleX(1.0776);'>Education CCE</div>
<svg class="r" style="left:1911.9px;top:1954px" width="16" height="8" viewBox="0 0 16 8"><path d="M0 0 L16 0 L8 8 Z" fill="#444746"/></svg>
<div class="t" style='left:2019.20px;top:1944.60px;font-size:28px;line-height:28px;font-family:"Liberation Sans", sans-serif;font-weight:400;-webkit-text-stroke:0.5px #444746;color:#444746;transform:scaleX(1.0977);'>Dashboard Data</div>
<svg class="r" style="left:2267px;top:1954px" width="16" height="8" viewBox="0 0 16 8"><path d="M0 0 L16 0 L8 8 Z" fill="#444746"/></svg>
<svg class="r" style="left:1983.5px;top:1942px" width="24" height="34" viewBox="0 0 24 34"><path d="M5.9 13.5 V7.9 A6.6 6.6 0 0 1 19.1 7.9 V13.5" fill="none" stroke="#444746" stroke-width="2.8"/><rect x="0" y="12.2" width="24" height="21.6" rx="3" fill="#444746"/><circle cx="12" cy="23" r="3.1" fill="#f9fafd"/></svg>
<div class="r" style="left:2309px;top:1986px;width:230px;height:6px;background:#f09d36;"></div>
<div class="t" style='left:2333.19px;top:1944.60px;font-size:28px;line-height:28px;font-family:"Liberation Sans", sans-serif;font-weight:400;-webkit-text-stroke:0.5px #444746;color:#444746;transform:scaleX(1.1133);'>Start Here</div>
<svg class="r" style="left:2498.3px;top:1954px" width="16" height="8" viewBox="0 0 16 8"><path d="M0 0 L16 0 L8 8 Z" fill="#444746"/></svg>
<div class="r" style="left:2541px;top:1986px;width:335px;height:6px;background:#f09d36;"></div>
<div class="t" style='left:2564.90px;top:1944.60px;font-size:28px;line-height:28px;font-family:"Liberation Sans", sans-serif;font-weight:400;-webkit-text-stroke:0.5px #444746;color:#444746;transform:scaleX(1.1084);'>Automation Guide</div>
<svg class="r" style="left:2834.9px;top:1954px" width="16" height="8" viewBox="0 0 16 8"><path d="M0 0 L16 0 L8 8 Z" fill="#444746"/></svg>
</body></html>
